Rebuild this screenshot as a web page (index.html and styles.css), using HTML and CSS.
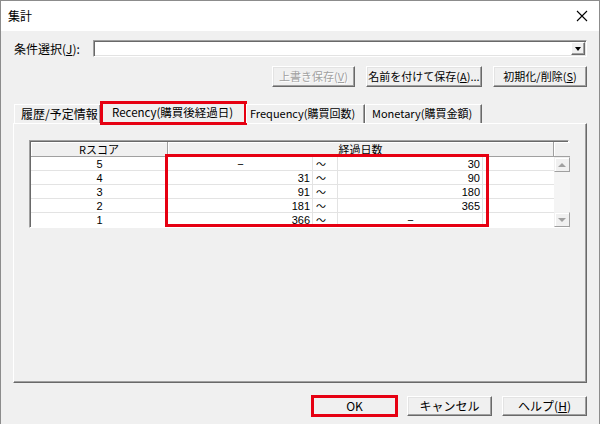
FILE: index.html
```html
<!DOCTYPE html>
<html lang="ja">
<head>
<meta charset="utf-8">
<title>集計</title>
<link rel="stylesheet" href="styles.css">
</head>
<body>
<div class="window">
  <div class="titlebar">
    <span class="title">集計</span>
    <svg class="close" width="12" height="12" viewBox="0 0 12 12"><path d="M1 1 L11 11 M11 1 L1 11" stroke="#000" stroke-width="1.1" fill="none"/></svg>
  </div>
  <div class="body">
    <div class="cond-row">
      <span class="cond-label">条件選択(<u>J</u>):</span>
      <div class="combo">
        <div class="combo-field"></div>
        <div class="combo-btn"><span class="arrow-down"></span></div>
      </div>
    </div>
    <div class="btn-row">
      <button class="btn btn-disabled" style="width:83px">上書き保存(<u>V</u>)</button>
      <button class="btn" style="width:116px">名前を付けて保存(<u>A</u>)...</button>
      <button class="btn" style="width:94px">初期化/削除(<u>S</u>)</button>
    </div>
    <div class="tabs">
      <div class="tab tab-first">履歴/予定情報</div>
      <div class="tab tab-active">Recency(購買後経過日)</div>
      <div class="tab tab-freq">Frequency(購買回数)</div>
      <div class="tab tab-mon">Monetary(購買金額)</div>
    </div>
    <div class="panel">
      <div class="grid-wrap">
        <div class="grid">
          <div class="hcell">Rスコア</div>
          <div class="hcell hspan">経過日数</div>
          <div class="hcell hblank"></div>

          <div class="cell c-score">5</div><div class="cell c-from center">−</div><div class="cell c-tilde">～</div><div class="cell c-to">30</div><div class="cell c-empty"></div>
          <div class="cell c-score">4</div><div class="cell c-from">31</div><div class="cell c-tilde">～</div><div class="cell c-to">90</div><div class="cell c-empty"></div>
          <div class="cell c-score">3</div><div class="cell c-from">91</div><div class="cell c-tilde">～</div><div class="cell c-to">180</div><div class="cell c-empty"></div>
          <div class="cell c-score">2</div><div class="cell c-from">181</div><div class="cell c-tilde">～</div><div class="cell c-to">365</div><div class="cell c-empty"></div>
          <div class="cell c-score last">1</div><div class="cell c-from last">366</div><div class="cell c-tilde last">～</div><div class="cell c-to center last">−</div><div class="cell c-empty last"></div>

          <div class="vscroll">
            <div class="sbtn"><span class="arrow-up-dis"></span></div>
            <div class="strack"></div>
            <div class="sbtn"><span class="arrow-down-dis"></span></div>
          </div>
        </div>
        <div class="hl-box"></div>
      </div>
    </div>
    <div class="footer">
      <button class="btn btn-ok">OK</button>
      <button class="btn">キャンセル</button>
      <button class="btn">ヘルプ(<u>H</u>)</button>
    </div>
  </div>
</div>
</body>
</html>
```
FILE: styles.css
```css
* { box-sizing: border-box; }
html, body { margin: 0; padding: 0; }
body {
  width: 600px;
  height: 424px;
  overflow: hidden;
  font-family: "Noto Sans CJK JP", "Noto Sans", sans-serif;
  font-size: 12px;
  color: #000;
  background: #f0f0f0;
}
.window {
  width: 600px;
  height: 424px;
  border: 1px solid #8c8c8c;
  border-bottom: none;
  display: flex;
  flex-direction: column;
  background: #f0f0f0;
}
.titlebar {
  height: 30px;
  flex: none;
  background: #fff;
  display: flex;
  align-items: center;
  justify-content: space-between;
  padding: 0 11px 0 7px;
}
.title { font-size: 12px; line-height: 14px; }
.close { display: block; }
.body {
  flex: 1;
  padding: 9px 12px 0 12px;
  display: flex;
  flex-direction: column;
}
.cond-row {
  display: flex;
  align-items: center;
  height: 17px;
}
.cond-label {
  width: 80px;
  padding-left: 1px;
  line-height: 15px;
}
.cond-label u, .btn u { text-decoration: underline; text-underline-offset: 1px; }
.combo {
  flex: 1;
  height: 17px;
  display: flex;
  align-items: center;
  background: #fff;
  border: 1px solid;
  border-color: #a0a0a0 #fff #fff #a0a0a0;
  box-shadow: inset 1px 1px 0 #696969, inset -1px -1px 0 #e3e3e3;
  padding: 1px 1px 1px 2px;
}
.combo-field { flex: 1; height: 100%; }
.combo-btn {
  width: 14px;
  height: 13px;
  background: #f0f0f0;
  border: 1px solid;
  border-color: #fff #696969 #696969 #fff;
  box-shadow: inset -1px -1px 0 #a0a0a0;
  display: flex;
  align-items: center;
  justify-content: center;
}
.arrow-down {
  width: 0; height: 0;
  border-left: 3.5px solid transparent;
  border-right: 3.5px solid transparent;
  border-top: 4px solid #000;
  margin-left: -1px;
}
.btn-row {
  margin-top: 9px;
  height: 21px;
  display: flex;
  justify-content: flex-end;
  gap: 11px;
}
.btn {
  height: 21px;
  font-family: inherit;
  font-size: 11px;
  color: #000;
  background: #f0f0f0;
  border: 1px solid;
  border-color: #fff #696969 #696969 #fff;
  box-shadow: inset -1px -1px 0 #a0a0a0, inset 1px 1px 0 #e3e3e3;
  padding: 0;
  line-height: 15px;
  white-space: nowrap;
}
.btn-disabled {
  color: #a0a0a0;
  text-shadow: 1px 1px 0 #fff;
}
.tabs {
  margin-top: 15px;
  height: 21px;
  display: flex;
  align-items: flex-end;
  padding-left: 1px;
  position: relative;
  z-index: 2;
  font-size: 11px;
}
.tab {
  height: 19px;
  line-height: 17px;
  white-space: nowrap;
  border-left: 1px solid #fff;
  border-top: 1px solid #fff;
  border-right: 1px solid #696969;
  box-shadow: inset -1px 0 0 #a0a0a0;
  background: #f0f0f0;
  padding-left: 6px;
}
.tab-first { width: 87px; font-size: 12px; padding-left: 6px; }
.tab-active {
  width: 145px;
  height: 22px;
  margin-bottom: -1px;
  padding-left: 10px;
  line-height: 19px;
  font-size: 11.5px;
  outline: 3px solid #e60012;
  outline-offset: -2px;
}
.tab-freq { width: 119px; padding-left: 3px; }
.tab-mon { width: 117px; padding-left: 6px; }
.panel {
  height: 260px;
  border: 1px solid;
  border-color: #fff #696969 #696969 #fff;
  box-shadow: inset -1px -1px 0 #a0a0a0;
  padding: 16px 0 0 15px;
  position: relative;
  z-index: 1;
}
.grid-wrap {
  position: relative;
  width: 540px;
}
.grid {
  display: grid;
  grid-template-columns: 137px 145px 25px 145px 71px 16px;
  grid-template-rows: 15px repeat(5, 14px);
  border: 1px solid;
  border-color: #a0a0a0 #fff #fff #a0a0a0;
  box-shadow: inset 1px 1px 0 #696969;
  padding: 1px 0 0 1px;
  width: 540px;
  background: #fff;
}
.hcell {
  background: #f0f0f0;
  border-right: 1px solid #a0a0a0;
  border-bottom: 1px solid #a0a0a0;
  box-shadow: inset 1px 1px 0 #fff;
  text-align: center;
  line-height: 14px;
  font-size: 11px;
}
.hspan { grid-column: 2 / span 4; }
.hblank { border-right: none; }
.cell {
  box-shadow: inset -1px -1px 0 #e3e3e3;
  line-height: 14px;
  height: 14px;
  font-family: "Liberation Sans", "Noto Sans CJK JP", sans-serif;
  font-size: 11px;
  white-space: nowrap;
}
.cell.last { box-shadow: inset -1px 0 0 #e3e3e3; }
.c-score { text-align: center; }
.c-from { text-align: right; padding-right: 3px; }
.c-to { text-align: right; padding-right: 3px; }
.c-tilde {
  text-align: left;
  padding-left: 3px;
  font-family: "Noto Sans CJK JP", sans-serif;
  font-size: 10px;
}
.center { text-align: center; padding-right: 0; }
.c-empty { box-shadow: inset 0 -1px 0 #e3e3e3; }
.c-empty.last { box-shadow: none; }
.vscroll {
  grid-column: 6;
  grid-row: 2 / span 5;
  display: flex;
  flex-direction: column;
  background: #f0f0f0;
}
.sbtn {
  height: 15px;
  flex: none;
  background: #f0f0f0;
  border: 1px solid;
  border-color: #f0f0f0 #a0a0a0 #a0a0a0 #f0f0f0;
  box-shadow: inset 1px 1px 0 #fff;
  display: flex;
  align-items: center;
  justify-content: center;
}
.strack { flex: 1; background: #f4f4f4; }
.arrow-up-dis {
  width: 0; height: 0;
  border-left: 4px solid transparent;
  border-right: 4px solid transparent;
  border-bottom: 4px solid #a0a0a0;
}
.arrow-down-dis {
  width: 0; height: 0;
  border-left: 4px solid transparent;
  border-right: 4px solid transparent;
  border-top: 4px solid #a0a0a0;
}
.hl-box {
  position: absolute;
  left: 136px;
  top: 14px;
  width: 324px;
  height: 73px;
  border: 3px solid #e60012;
  pointer-events: none;
}
.footer {
  margin-top: 13px;
  display: flex;
  justify-content: flex-end;
  gap: 10px;
}
.footer .btn { width: 85px; height: 20px; line-height: 14px; font-size: 12px; }
.btn-ok {
  outline: 3px solid #e60012;
  outline-offset: -2px;
}
```
